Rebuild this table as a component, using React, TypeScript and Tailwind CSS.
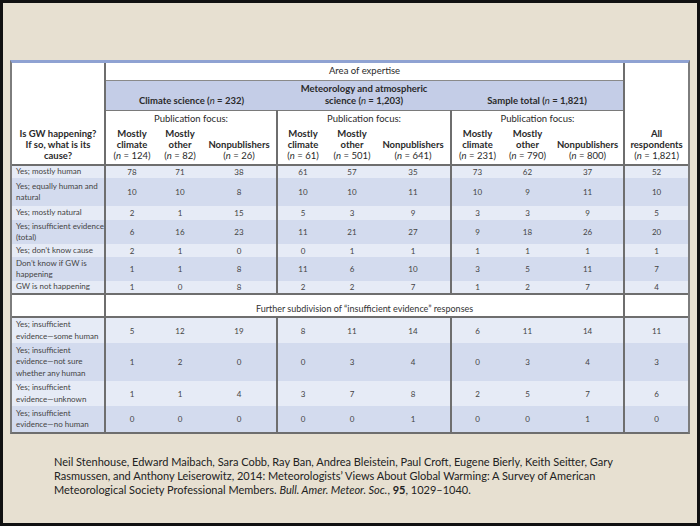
import React from 'react';

type Row = { label: string[]; v: number[]; h: string };

const main: Row[] = [
  { label: ['Yes; mostly human'], v: [78, 71, 38, 61, 57, 35, 73, 62, 37, 52], h: 'h-[13px]' },
  { label: ['Yes; equally human and', 'natural'], v: [10, 10, 8, 10, 10, 11, 10, 9, 11, 10], h: 'h-[28px]' },
  { label: ['Yes; mostly natural'], v: [2, 1, 15, 5, 3, 9, 3, 3, 9, 5], h: 'h-[14px]' },
  { label: ['Yes; insufficient evidence', '(total)'], v: [6, 16, 23, 11, 21, 27, 9, 18, 26, 20], h: 'h-[24px]' },
  { label: ['Yes; don’t know cause'], v: [2, 1, 0, 0, 1, 1, 1, 1, 1, 1], h: 'h-[13px]' },
  { label: ['Don’t know if GW is', 'happening'], v: [1, 1, 8, 11, 6, 10, 3, 5, 11, 7], h: 'h-[24px]' },
  { label: ['GW is not happening'], v: [1, 0, 8, 2, 2, 7, 1, 2, 7, 4], h: 'h-[13px]' },
];

const sub: Row[] = [
  { label: ['Yes; insufficient', 'evidence—some human'], v: [5, 12, 19, 8, 11, 14, 6, 11, 14, 11], h: 'h-[26px]' },
  { label: ['Yes; insufficient', 'evidence—not sure', 'whether any human'], v: [1, 2, 0, 0, 3, 4, 0, 3, 4, 3], h: 'h-[38px]' },
  { label: ['Yes; insufficient', 'evidence—unknown'], v: [1, 1, 4, 3, 7, 8, 2, 5, 7, 6], h: 'h-[25px]' },
  { label: ['Yes; insufficient', 'evidence—no human'], v: [0, 0, 0, 0, 0, 1, 0, 0, 1, 0], h: 'h-[26px]' },
];

const colWidths = [93, 53, 44, 75, 51, 48, 75, 52, 49, 72, 64];

function N({ n }: { n: string }) {
  return (
    <>
      (<i className="font-normal">n</i> = {n})
    </>
  );
}

function SubHead({ lines, n, divider }: { lines: string[]; n: string; divider?: boolean }) {
  return (
    <td className={`align-bottom pb-[3px] text-center leading-[11px] ${divider ? 'border-l-2 border-[#6e6e6e]' : ''}`}>
      {lines.map((l) => (
        <div key={l} className="font-bold text-[9.5px] text-[#2a2a2a]">
          {l}
        </div>
      ))}
      <div className="text-[9.5px] text-[#2a2a2a]">
        <N n={n} />
      </div>
    </td>
  );
}

function DataRows({ rows }: { rows: Row[] }) {
  return (
    <>
      {rows.map((r, i) => (
        <tr key={r.label.join()} className={`${r.h} ${i % 2 === 0 ? 'bg-[#e6ebf6]' : 'bg-[#d3dbee]'}`}>
          <td className="border-r-2 border-[#6e6e6e] pl-[4px] text-[8px] leading-[11.5px] text-[#444]">
            {r.label.map((l) => (
              <div key={l}>{l}</div>
            ))}
          </td>
          {r.v.map((v, j) => (
            <td
              key={j}
              className={`text-center text-[8px] text-[#444] ${j === 3 || j === 6 || j === 9 ? 'border-l-2 border-[#6e6e6e]' : ''}`}
            >
              {v}
            </td>
          ))}
        </tr>
      ))}
    </>
  );
}

export default function App() {
  return (
    <div className="h-[526px] w-[700px] overflow-hidden border-[3px] border-[#111] bg-[#e7e0d1] font-['Lato',sans-serif]">
      <div className="ml-[7px] mt-[57px] w-[680px] border-t-[3px] border-x-2 border-b-2 border-t-[#8fa2d2] border-x-[#7d7d7d] border-b-[#6e6e6e] bg-white">
        <table className="w-[676px] table-fixed border-collapse">
          <colgroup>
            {colWidths.map((w, i) => (
              <col key={i} style={{ width: w }} />
            ))}
          </colgroup>
          <thead>
            <tr className="h-[17px]">
              <td
                rowSpan={4}
                className="border-r-2 border-b-2 border-[#6e6e6e] bg-white pb-[3px] text-center align-bottom text-[9.5px] font-bold leading-[11px] text-[#2a2a2a]"
              >
                <div>Is GW happening?</div>
                <div>If so, what is its</div>
                <div>cause?</div>
              </td>
              <td colSpan={9} className="border-b border-[#8a8a8a] text-center text-[9.5px] text-[#2a2a2a]">
                Area of expertise
              </td>
              <td
                rowSpan={4}
                className="border-l-2 border-b-2 border-[#6e6e6e] bg-white pb-[3px] text-center align-bottom text-[9.5px] leading-[11px] text-[#2a2a2a]"
              >
                <div className="font-bold">All</div>
                <div className="font-bold">respondents</div>
                <div>
                  <N n="1,821" />
                </div>
              </td>
            </tr>
            <tr className="h-[30px] bg-[#c4cde7]">
              <td colSpan={3} className="border-b border-[#7a7a7a] pb-[3px] text-center align-bottom text-[9.5px] font-bold leading-[12px] text-[#2a2a2a]">
                Climate science <N n="232" />
              </td>
              <td colSpan={3} className="border-b border-[#7a7a7a] pb-[3px] text-center align-bottom text-[9.5px] font-bold leading-[12px] text-[#2a2a2a]">
                <div>Meteorology and atmospheric</div>
                <div>
                  science <N n="1,203" />
                </div>
              </td>
              <td colSpan={3} className="border-b border-[#7a7a7a] pb-[3px] text-center align-bottom text-[9.5px] font-bold leading-[12px] text-[#2a2a2a]">
                Sample total <N n="1,821" />
              </td>
            </tr>
            <tr className="h-[18px]">
              {[0, 1, 2].map((g) => (
                <td
                  key={g}
                  colSpan={3}
                  className={`text-center text-[9.5px] text-[#2a2a2a] ${g > 0 ? 'border-l-2 border-[#6e6e6e]' : ''}`}
                >
                  Publication focus:
                </td>
              ))}
            </tr>
            <tr className="h-[37px] border-b-2 border-[#6e6e6e]">
              <SubHead lines={['Mostly', 'climate']} n="124" />
              <SubHead lines={['Mostly', 'other']} n="82" />
              <SubHead lines={['Nonpublishers']} n="26" />
              <SubHead lines={['Mostly', 'climate']} n="61" divider />
              <SubHead lines={['Mostly', 'other']} n="501" />
              <SubHead lines={['Nonpublishers']} n="641" />
              <SubHead lines={['Mostly', 'climate']} n="231" divider />
              <SubHead lines={['Mostly', 'other']} n="790" />
              <SubHead lines={['Nonpublishers']} n="800" />
            </tr>
          </thead>
          <tbody>
            <DataRows rows={main} />
            <tr className="h-[23px] border-y-2 border-[#6e6e6e] bg-white">
              <td className="border-r-2 border-[#6e6e6e]" />
              <td colSpan={9} className="pt-[6px] text-center text-[9px] leading-[12px] text-[#333]">
                Further subdivision of “insufficient evidence” responses
              </td>
              <td className="border-l-2 border-[#6e6e6e]" />
            </tr>
            <DataRows rows={sub} />
          </tbody>
        </table>
      </div>

      <p className="ml-[51px] mt-[21px] text-[11px] leading-[14px] text-[#222]">
        Neil Stenhouse, Edward Maibach, Sara Cobb, Ray Ban, Andrea Bleistein, Paul Croft, Eugene Bierly, Keith Seitter, Gary
        <br />
        Rasmussen, and Anthony Leiserowitz, 2014: Meteorologists’ Views About Global Warming: A Survey of American
        <br />
        Meteorological Society Professional Members. <i>Bull. Amer. Meteor. Soc.</i>, <b>95</b>, 1029–1040.
      </p>
    </div>
  );
}
